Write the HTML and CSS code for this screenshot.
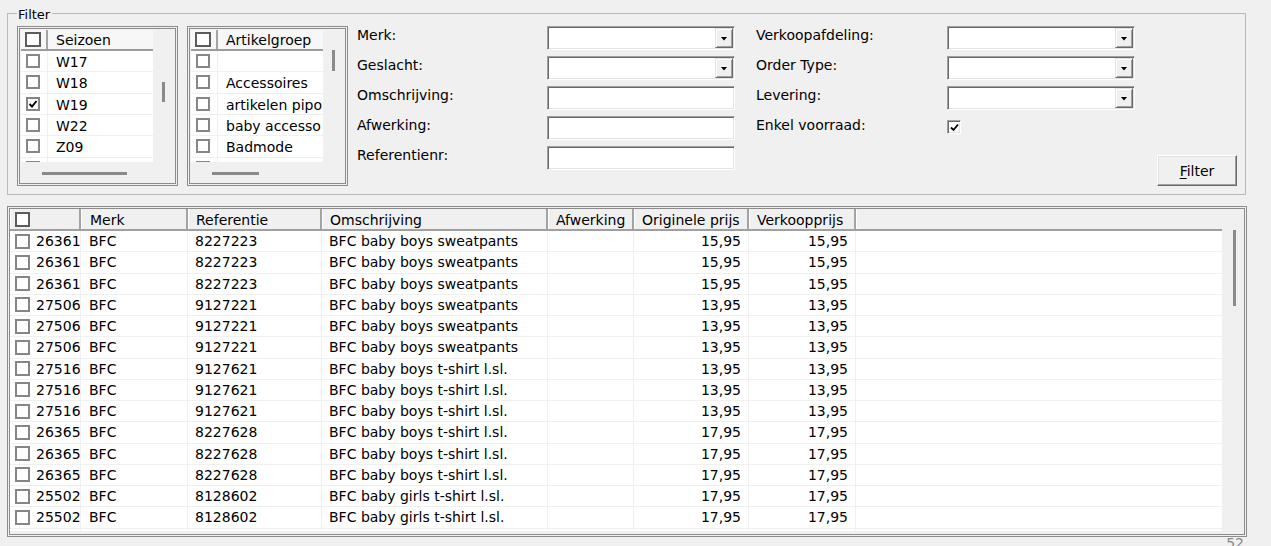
FILE: index.html
```html
<!DOCTYPE html>
<html lang="nl">
<head>
<meta charset="utf-8">
<title>Filter</title>
<link rel="stylesheet" href="styles.css">
</head>
<body>
<div class="app">
  <fieldset class="filter">
    <legend>Filter</legend>
    <div class="filter-body">
      <div class="listbox lb-seizoen">
        <div class="lb-list">
          <div class="lb-head"><div class="lb-cbcol"><span class="cb cb-head"></span></div><div class="lb-text">Seizoen</div></div>
          <div class="lb-row"><div class="lb-cbcol"><span class="cb"></span></div><div class="lb-text">W17</div></div>
          <div class="lb-row"><div class="lb-cbcol"><span class="cb"></span></div><div class="lb-text">W18</div></div>
          <div class="lb-row"><div class="lb-cbcol"><span class="cb checked"><svg viewBox="0 0 10 10" width="10" height="10"><path d="M1.5 5 L4 7.5 L8.5 2" fill="none" stroke="#000" stroke-width="1.9"/></svg></span></div><div class="lb-text">W19</div></div>
          <div class="lb-row"><div class="lb-cbcol"><span class="cb"></span></div><div class="lb-text">W22</div></div>
          <div class="lb-row"><div class="lb-cbcol"><span class="cb"></span></div><div class="lb-text">Z09</div></div>
          <div class="lb-row"><div class="lb-cbcol"><span class="cb"></span></div><div class="lb-text"></div></div>
        </div>
        <div class="lb-vscroll"><div class="thumb-v"></div></div>
        <div class="lb-hscroll"><div class="thumb-h"></div></div>
        <div class="lb-corner"></div>
      </div>

      <div class="listbox lb-artikel">
        <div class="lb-list">
          <div class="lb-head"><div class="lb-cbcol"><span class="cb cb-head"></span></div><div class="lb-text">Artikelgroep</div></div>
          <div class="lb-row"><div class="lb-cbcol"><span class="cb"></span></div><div class="lb-text"></div></div>
          <div class="lb-row"><div class="lb-cbcol"><span class="cb"></span></div><div class="lb-text">Accessoires</div></div>
          <div class="lb-row"><div class="lb-cbcol"><span class="cb"></span></div><div class="lb-text">artikelen pipo</div></div>
          <div class="lb-row"><div class="lb-cbcol"><span class="cb"></span></div><div class="lb-text">baby accesso</div></div>
          <div class="lb-row"><div class="lb-cbcol"><span class="cb"></span></div><div class="lb-text">Badmode</div></div>
          <div class="lb-row"><div class="lb-cbcol"><span class="cb"></span></div><div class="lb-text"></div></div>
        </div>
        <div class="lb-vscroll"><div class="thumb-v"></div></div>
        <div class="lb-hscroll"><div class="thumb-h"></div></div>
        <div class="lb-corner"></div>
      </div>

      <div class="form-col">
        <label class="lbl">Merk:</label><div class="field combo"><span class="drop"></span></div>
        <label class="lbl">Geslacht:</label><div class="field combo"><span class="drop"></span></div>
        <label class="lbl">Omschrijving:</label><div class="field"></div>
        <label class="lbl">Afwerking:</label><div class="field"></div>
        <label class="lbl">Referentienr:</label><div class="field"></div>
      </div>

      <div class="form-col second">
        <label class="lbl">Verkoopafdeling:</label><div class="field combo"><span class="drop"></span></div>
        <label class="lbl">Order Type:</label><div class="field combo"><span class="drop"></span></div>
        <label class="lbl">Levering:</label><div class="field combo"><span class="drop"></span></div>
        <label class="lbl">Enkel voorraad:</label><div class="chk-cell"><span class="chk"><svg viewBox="0 0 9 9" width="9" height="9"><path d="M1 4.5 L3.5 7 L8 1.5" fill="none" stroke="#000" stroke-width="1.8"/></svg></span></div>
      </div>

      <div class="actions">
        <button class="btn" type="button"><span class="u">F</span>ilter</button>
      </div>
    </div>
  </fieldset>

  <div class="grid">
    <div class="table">
      <div class="thead">
        <div class="c c0"><span class="cb cb-head"></span></div>
        <div class="c c1">Merk</div>
        <div class="c c2">Referentie</div>
        <div class="c c3">Omschrijving</div>
        <div class="c c4">Afwerking</div>
        <div class="c c5">Originele prijs</div>
        <div class="c c6">Verkoopprijs</div>
        <div class="c cf"></div>
      </div>
      <div class="tbody">
        <div class="tr"><div class="c c0"><span class="cb"></span>26361</div><div class="c c1">BFC</div><div class="c c2">8227223</div><div class="c c3">BFC baby boys sweatpants</div><div class="c c4"></div><div class="c c5 num">15,95</div><div class="c c6 num">15,95</div><div class="c cf"></div></div>
        <div class="tr"><div class="c c0"><span class="cb"></span>26361</div><div class="c c1">BFC</div><div class="c c2">8227223</div><div class="c c3">BFC baby boys sweatpants</div><div class="c c4"></div><div class="c c5 num">15,95</div><div class="c c6 num">15,95</div><div class="c cf"></div></div>
        <div class="tr"><div class="c c0"><span class="cb"></span>26361</div><div class="c c1">BFC</div><div class="c c2">8227223</div><div class="c c3">BFC baby boys sweatpants</div><div class="c c4"></div><div class="c c5 num">15,95</div><div class="c c6 num">15,95</div><div class="c cf"></div></div>
        <div class="tr"><div class="c c0"><span class="cb"></span>27506</div><div class="c c1">BFC</div><div class="c c2">9127221</div><div class="c c3">BFC baby boys sweatpants</div><div class="c c4"></div><div class="c c5 num">13,95</div><div class="c c6 num">13,95</div><div class="c cf"></div></div>
        <div class="tr"><div class="c c0"><span class="cb"></span>27506</div><div class="c c1">BFC</div><div class="c c2">9127221</div><div class="c c3">BFC baby boys sweatpants</div><div class="c c4"></div><div class="c c5 num">13,95</div><div class="c c6 num">13,95</div><div class="c cf"></div></div>
        <div class="tr"><div class="c c0"><span class="cb"></span>27506</div><div class="c c1">BFC</div><div class="c c2">9127221</div><div class="c c3">BFC baby boys sweatpants</div><div class="c c4"></div><div class="c c5 num">13,95</div><div class="c c6 num">13,95</div><div class="c cf"></div></div>
        <div class="tr"><div class="c c0"><span class="cb"></span>27516</div><div class="c c1">BFC</div><div class="c c2">9127621</div><div class="c c3">BFC baby boys t-shirt l.sl.</div><div class="c c4"></div><div class="c c5 num">13,95</div><div class="c c6 num">13,95</div><div class="c cf"></div></div>
        <div class="tr"><div class="c c0"><span class="cb"></span>27516</div><div class="c c1">BFC</div><div class="c c2">9127621</div><div class="c c3">BFC baby boys t-shirt l.sl.</div><div class="c c4"></div><div class="c c5 num">13,95</div><div class="c c6 num">13,95</div><div class="c cf"></div></div>
        <div class="tr"><div class="c c0"><span class="cb"></span>27516</div><div class="c c1">BFC</div><div class="c c2">9127621</div><div class="c c3">BFC baby boys t-shirt l.sl.</div><div class="c c4"></div><div class="c c5 num">13,95</div><div class="c c6 num">13,95</div><div class="c cf"></div></div>
        <div class="tr"><div class="c c0"><span class="cb"></span>26365</div><div class="c c1">BFC</div><div class="c c2">8227628</div><div class="c c3">BFC baby boys t-shirt l.sl.</div><div class="c c4"></div><div class="c c5 num">17,95</div><div class="c c6 num">17,95</div><div class="c cf"></div></div>
        <div class="tr"><div class="c c0"><span class="cb"></span>26365</div><div class="c c1">BFC</div><div class="c c2">8227628</div><div class="c c3">BFC baby boys t-shirt l.sl.</div><div class="c c4"></div><div class="c c5 num">17,95</div><div class="c c6 num">17,95</div><div class="c cf"></div></div>
        <div class="tr"><div class="c c0"><span class="cb"></span>26365</div><div class="c c1">BFC</div><div class="c c2">8227628</div><div class="c c3">BFC baby boys t-shirt l.sl.</div><div class="c c4"></div><div class="c c5 num">17,95</div><div class="c c6 num">17,95</div><div class="c cf"></div></div>
        <div class="tr"><div class="c c0"><span class="cb"></span>25502</div><div class="c c1">BFC</div><div class="c c2">8128602</div><div class="c c3">BFC baby girls t-shirt l.sl.</div><div class="c c4"></div><div class="c c5 num">17,95</div><div class="c c6 num">17,95</div><div class="c cf"></div></div>
        <div class="tr"><div class="c c0"><span class="cb"></span>25502</div><div class="c c1">BFC</div><div class="c c2">8128602</div><div class="c c3">BFC baby girls t-shirt l.sl.</div><div class="c c4"></div><div class="c c5 num">17,95</div><div class="c c6 num">17,95</div><div class="c cf"></div></div>
        <div class="tr"><div class="c c0"><span class="cb"></span></div><div class="c c1"></div><div class="c c2"></div><div class="c c3"></div><div class="c c4"></div><div class="c c5"></div><div class="c c6"></div><div class="c cf"></div></div>
      </div>
    </div>
    <div class="vscroll"><div class="thumb-v"></div></div>
  </div>
  <div class="status">52</div>
</div>
</body>
</html>
```

FILE: styles.css
```css
* { box-sizing: border-box; }

html, body { margin: 0; padding: 0; }

body {
  width: 1271px;
  height: 546px;
  overflow: hidden;
  background: #f0f0f0;
  color: #000;
  font-family: "DejaVu Sans", Verdana, sans-serif;
  font-size: 14px;
  line-height: 16px;
}

.app {
  display: flex;
  flex-direction: column;
  padding: 4px 0 0 7px;
}

/* ---------- Filter group box ---------- */
.filter {
  margin: 0;
  min-width: 0;
  width: 1239px;
  height: 191px;
  border: 1px solid #b9b9b9;
  padding: 4px 8px 8px 9px;
}

.filter legend {
  font-size: 13px;
  line-height: 14px;
  padding: 4px 2px 0 1px;
  margin: 0;
}

.filter-body {
  display: flex;
  height: 160px;
}

/* ---------- List boxes ---------- */
.listbox {
  width: 161px;
  height: 160px;
  border: 3px double #8c8c8c;
  padding: 1px 1px 0 1px;
  display: grid;
  grid-template-columns: 132px 21px;
  grid-template-rows: 132px 21px;
  margin-right: 9px;
}

.lb-list {
  background: #fff;
  overflow: hidden;
}

.lb-head {
  display: flex;
  height: 21px;
  background: #f7f7f7;
  border-bottom: 2px solid #9c9c9c;
}

.lb-head .lb-cbcol {
  border-right: 2px solid #a4a4a4;
  padding-left: 4px;
}

.lb-head .lb-text { padding-top: 1px; }

.lb-row {
  display: flex;
  height: 21.33px;
  border-bottom: 1px solid #f0f0f0;
}

.lb-row .lb-text { padding-top: 2px; }

.lb-cbcol {
  width: 27px;
  flex: none;
  display: flex;
  align-items: center;
  padding-left: 5px;
  border-right: 1px solid #f0f0f0;
}

.lb-text {
  flex: 1;
  min-width: 0;
  padding-left: 8px;
  display: flex;
  align-items: center;
  white-space: nowrap;
  overflow: hidden;
}

.lb-vscroll { background: #f0f0f0; }
.lb-hscroll { background: #f0f0f0; }
.lb-corner { background: #f0f0f0; }

.thumb-v {
  width: 3px;
  background: #8a8a8a;
}

.lb-vscroll .thumb-v { margin-left: 9px; }

.thumb-h {
  height: 3px;
  margin-top: 10px;
  margin-left: 21px;
  background: #8a8a8a;
}

.lb-seizoen .thumb-v { margin-top: 52px; height: 20px; }
.lb-seizoen .thumb-h { width: 85px; }
.lb-artikel .thumb-v { margin-top: 20px; height: 21px; }
.lb-artikel .thumb-h { width: 47px; }

/* ---------- Checkboxes ---------- */
.cb {
  display: flex;
  align-items: center;
  justify-content: center;
  flex: none;
  width: 15px;
  height: 15px;
  border: 2px solid #868686;
  background: #fff;
}

.lb-list .cb { width: 14px; height: 14px; }
.lb-head .cb { width: 16px; height: 15px; }

.cb-head { border-color: #5c5c5c; }

.cb.checked { border-color: #868686; }

/* ---------- Form fields ---------- */
.form-col {
  display: grid;
  grid-template-columns: 190px 188px;
  grid-auto-rows: 24px;
  row-gap: 6px;
}

.form-col.second {
  margin-left: 21px;
  grid-template-columns: 191px 188px;
}

.lbl {
  margin-top: 1px;
  white-space: nowrap;
}

.field {
  height: 24px;
  background: #fff;
  border: 1px solid;
  border-color: #a0a0a0 #fff #fff #a0a0a0;
  box-shadow: inset 1px 1px 0 #696969, inset -1px -1px 0 #e3e3e3;
}

.combo {
  display: flex;
  justify-content: flex-end;
  padding: 1px;
}

.drop {
  width: 18px;
  height: 20px;
  background: #f0f0f0;
  border: 1px solid;
  border-color: #e3e3e3 #696969 #696969 #e3e3e3;
  box-shadow: inset 1px 1px 0 #fff, inset -1px -1px 0 #a0a0a0;
  display: flex;
  align-items: center;
  justify-content: center;
  padding-top: 1px;
}

.drop::after {
  content: "";
  width: 7px;
  height: 4px;
  background: #000;
  clip-path: polygon(0 0, 100% 0, 50% 100%);
}

.chk-cell {
  display: flex;
  align-items: flex-start;
  padding-top: 4px;
}

.chk {
  width: 14px;
  height: 14px;
  background: #fff;
  border: 1px solid;
  border-color: #a0a0a0 #fff #fff #a0a0a0;
  box-shadow: inset 1px 1px 0 #696969, inset -1px -1px 0 #e3e3e3;
  display: flex;
  align-items: center;
  justify-content: center;
  padding: 1px 0 0 1px;
}

.actions {
  flex: 1;
  display: flex;
  justify-content: flex-end;
  align-items: flex-end;
}

.btn {
  width: 80px;
  height: 31px;
  margin: 0;
  padding: 0;
  background: #f0f0f0;
  font: inherit;
  color: #000;
  border: 1px solid;
  border-color: #fff #696969 #696969 #fff;
  box-shadow: inset -1px -1px 0 #a0a0a0, inset 1px 1px 0 #e3e3e3;
}

.u { text-decoration: underline; text-underline-offset: 2px; }

/* ---------- Data grid ---------- */
.grid {
  margin-top: 11px;
  width: 1240px;
  height: 331px;
  border: 3px double #8c8c8c;
  display: flex;
}

.table {
  width: 1212px;
  display: flex;
  flex-direction: column;
  background: #f0f0f0;
}

.thead {
  display: flex;
  height: 22px;
  flex: none;
  background: #f0f0f0;
  border-bottom: 2px solid #a0a0a0;
}

.tbody {
  height: 300px;
  overflow: hidden;
  background: #fff;
}

.tr {
  display: flex;
  height: 21.25px;
  border-bottom: 1px solid #f0f0f0;
}

.c {
  flex: none;
  display: flex;
  align-items: center;
  padding-left: 7px;
  white-space: nowrap;
  overflow: hidden;
  border-right: 1px solid #f0f0f0;
}

.thead .c {
  border-right: 2px solid #a3a3a3;
  border-left: 1px solid #fff;
  padding-top: 1px;
}

.thead .cf { border-right: 0; }

.c0 { width: 71px; padding-left: 5px; gap: 6px; }
.c1 { width: 107px; padding-left: 8px; }
.c2 { width: 134px; }
.c3 { width: 226px; }
.c4 { width: 86px; }
.c5 { width: 115px; }
.c6 { width: 107px; }
.cf { flex: 1; border-right: 0; }

.thead .c0 { padding-left: 4px; padding-top: 0; }

.num {
  justify-content: flex-end;
  padding-left: 0;
  padding-right: 7px;
}

.vscroll {
  width: 22px;
  background: #f0f0f0;
}

.vscroll .thumb-v {
  margin-left: 11px;
  margin-top: 21px;
  height: 76px;
}

.status {
  width: 1240px;
  margin-top: -2px;
  padding-right: 3px;
  text-align: right;
  color: #8a8a8a;
}
```
